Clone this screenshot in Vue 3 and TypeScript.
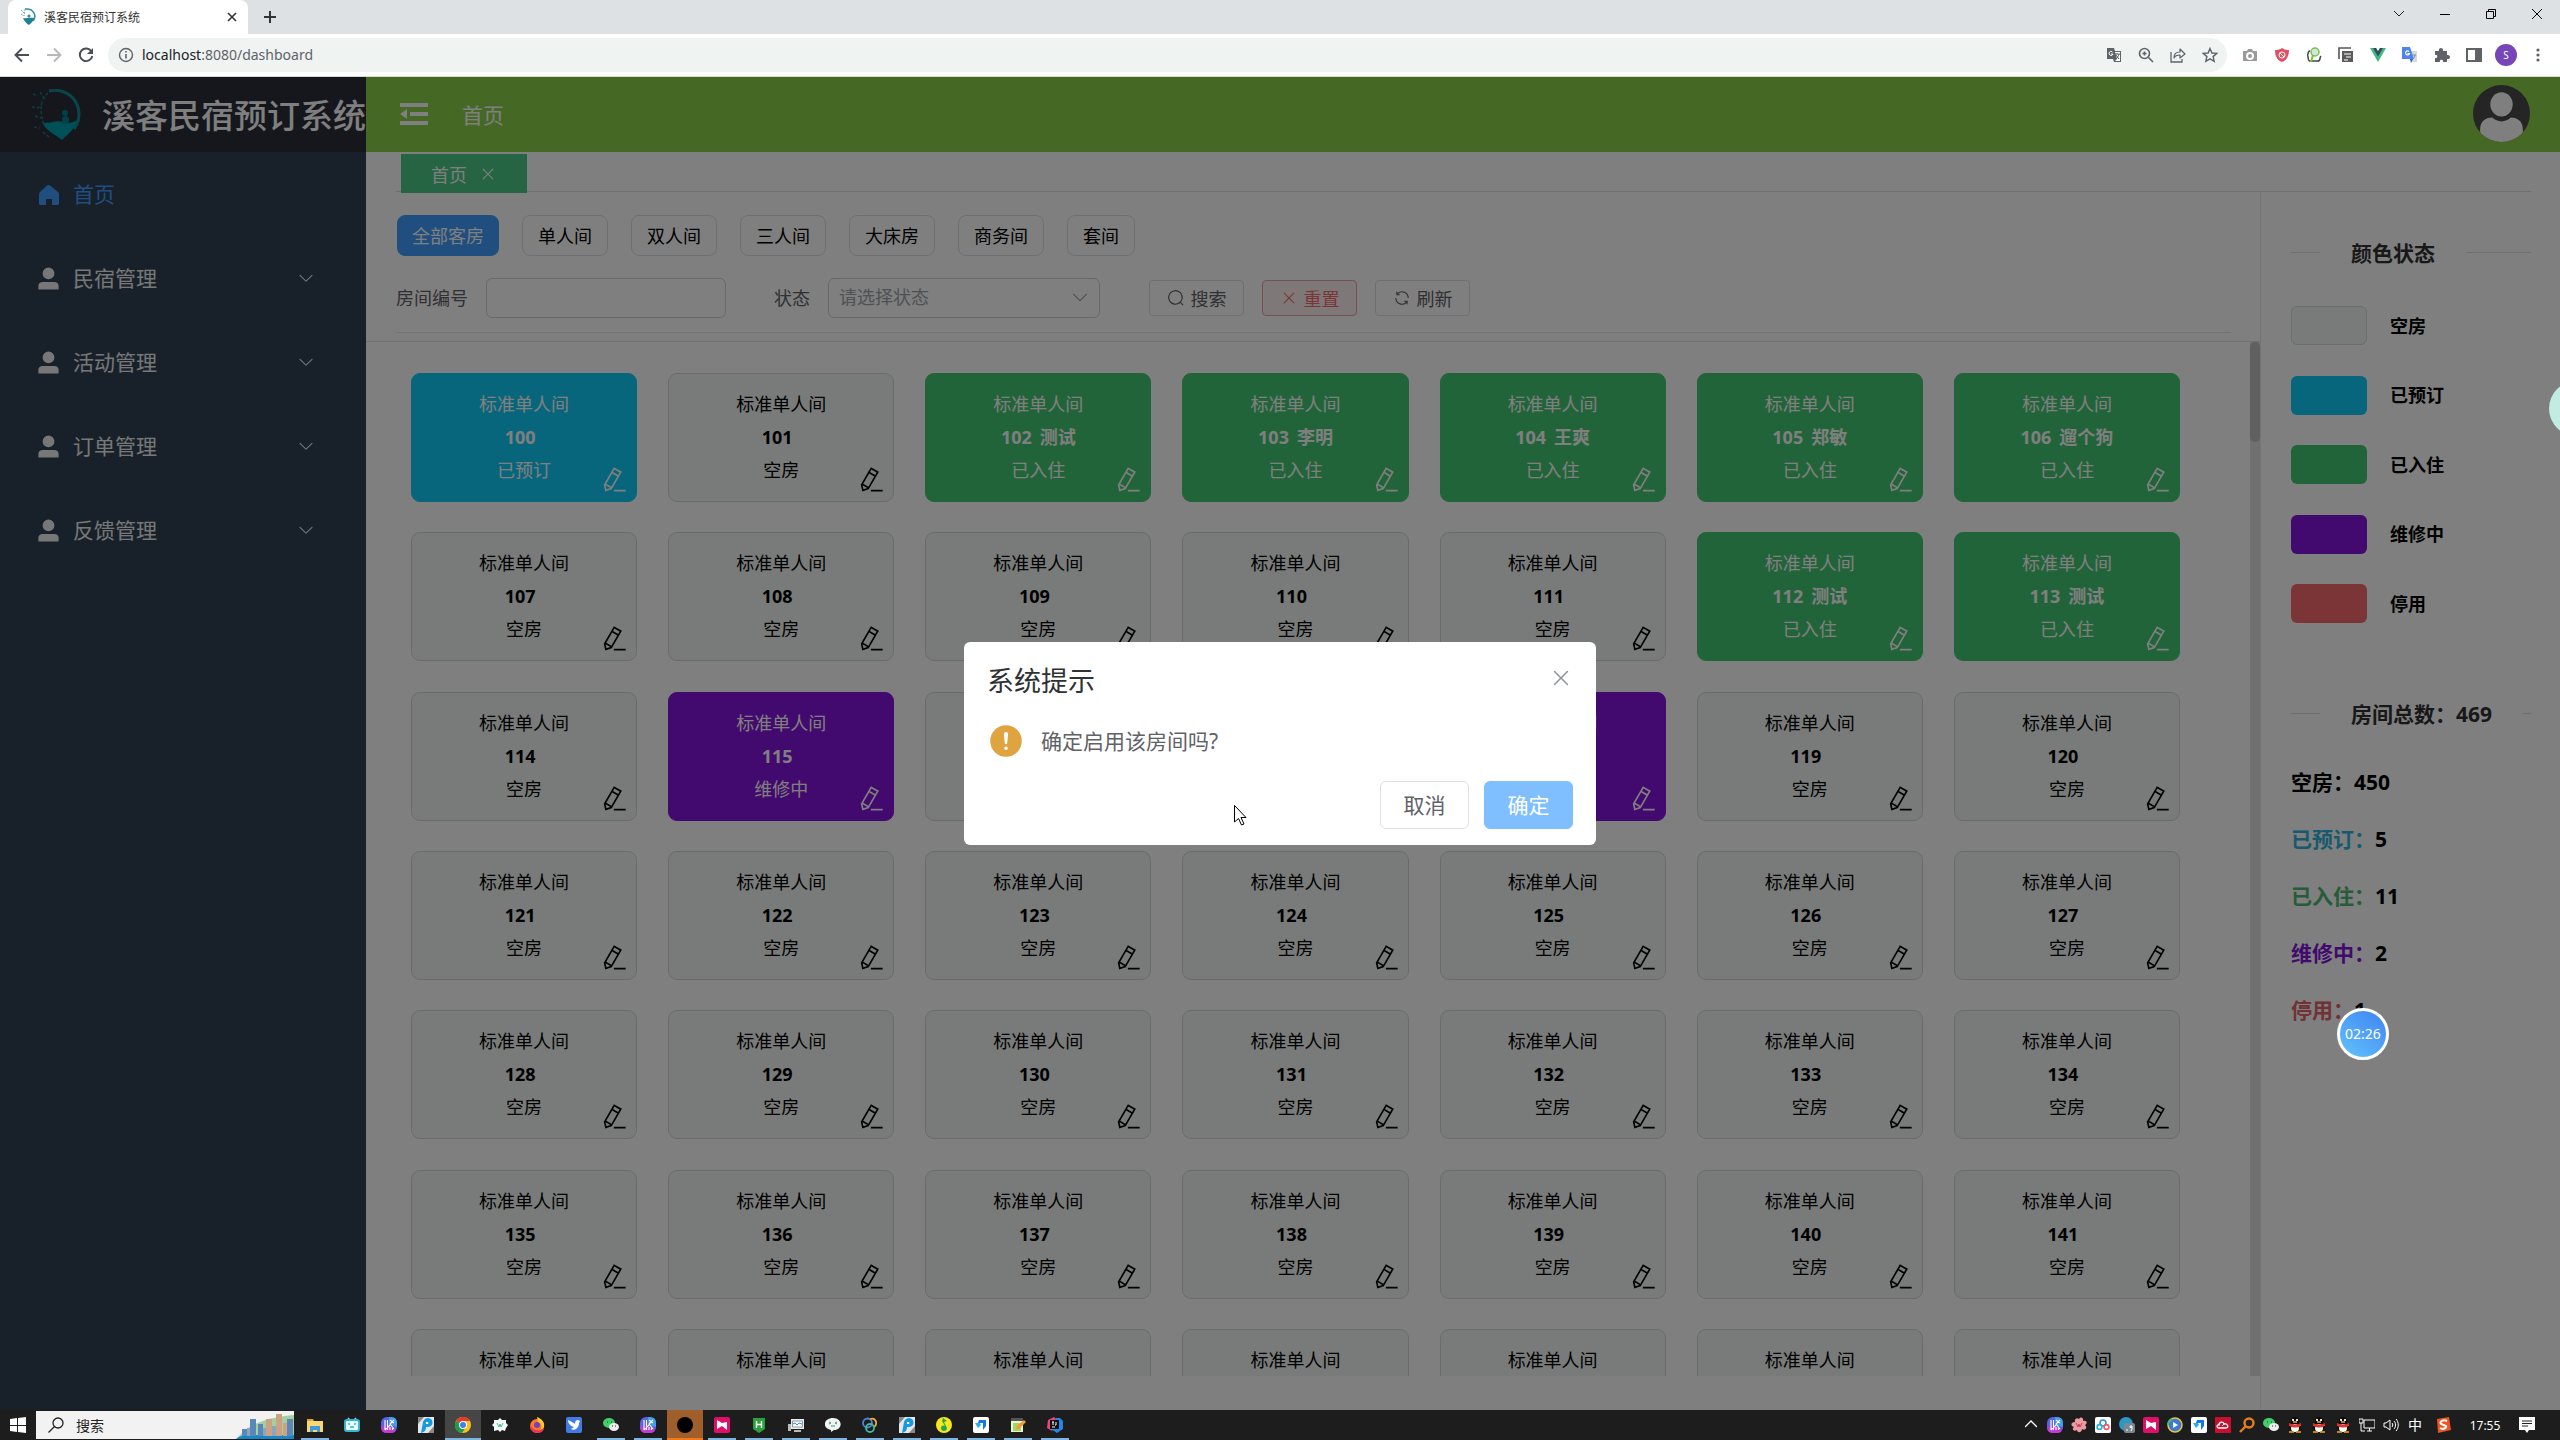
<script setup lang="ts">
import { ref } from 'vue'

type Status = 'empty' | 'booked' | 'occupied' | 'repair' | 'disabled'

interface Room {
  no: number
  guest: string
  status: Status
}

const statusText: Record<Status, string> = {
  empty: '空房',
  booked: '已预订',
  occupied: '已入住',
  repair: '维修中',
  disabled: '停用',
}
const statuses = Object.keys(statusText) as Status[]
const counts: Record<Status, number> = { empty: 450, booked: 5, occupied: 11, repair: 2, disabled: 1 }

const special: Record<number, [Status, string]> = {
  100: ['booked', ''],
  102: ['occupied', '测试'],
  103: ['occupied', '李明'],
  104: ['occupied', '王爽'],
  105: ['occupied', '郑敏'],
  106: ['occupied', '遛个狗'],
  112: ['occupied', '测试'],
  113: ['occupied', '测试'],
  115: ['repair', ''],
  118: ['repair', ''],
}
const rooms: Room[] = Array.from({ length: 49 }, (_, i) => {
  const no = 100 + i
  const [status, guest] = special[no] ?? ['empty', '']
  return { no, guest, status }
})

const types = ['全部客房', '单人间', '双人间', '三人间', '大床房', '商务间', '套间']
const activeType = ref('全部客房')
const menus = ['民宿管理', '活动管理', '订单管理', '反馈管理']
const roomNo = ref('')
const roomStatus = ref('')

const ep = {
  user: 'M288 320a224 224 0 1 0 448 0 224 224 0 1 0-448 0m544 608H160a32 32 0 0 1-32-32v-96a160 160 0 0 1 160-160h448a160 160 0 0 1 160 160v96a32 32 0 0 1-32 32z',
  pen: 'm199.04 672.64 193.984 112 224-387.968-193.92-112-224 388.032zm-23.872 60.16 32.896 148.288 144.896-45.696zM455.04 229.248l193.92 112 56.704-98.112-193.984-112zM104.32 708.8l384-665.024 304.768 175.936L409.152 884.8h.064l-248.448 78.336zm384 254.272v-64h448v64z',
  down: 'M831.872 340.864 512 652.672 192.128 340.864a30.592 30.592 0 0 0-42.752 0 29.12 29.12 0 0 0 0 41.6L489.664 714.24a32 32 0 0 0 44.672 0l340.288-331.712a29.12 29.12 0 0 0 0-41.728 30.592 30.592 0 0 0-42.752 0z',
  close: 'M764.288 214.592 512 466.88 259.712 214.592a31.936 31.936 0 0 0-45.12 45.12L466.752 512 214.528 764.224a31.936 31.936 0 1 0 45.12 45.184L512 557.184l252.288 252.288a31.936 31.936 0 0 0 45.12-45.12L557.12 512.064l252.288-252.352a31.936 31.936 0 1 0-45.12-45.184z',
  search: 'm795.904 750.72 124.992 124.928a32 32 0 0 1-45.248 45.248L750.656 795.904a416 416 0 1 1 45.248-45.248zM480 832a352 352 0 1 0 0-704 352 352 0 0 0 0 704',
  refresh: 'M771.776 794.88A384 384 0 0 1 128 512h64a320 320 0 0 0 555.712 216.448H654.72a32 32 0 1 1 0-64h149.056a32 32 0 0 1 32 32v148.928a32 32 0 1 1-64 0v-50.56zM276.288 295.616h92.992a32 32 0 0 1 0 64H220.16a32 32 0 0 1-32-32V178.56a32 32 0 0 1 64 0v50.56A384 384 0 0 1 896.128 512h-64a320 320 0 0 0-555.776-216.384z',
  warning: 'M512 64a448 448 0 1 1 0 896 448 448 0 0 1 0-896m0 192a58.432 58.432 0 0 0-58.24 63.744l23.36 256.384a35.072 35.072 0 0 0 69.76 0l23.296-256.384A58.432 58.432 0 0 0 512 256m0 512a51.2 51.2 0 1 0 0-102.4 51.2 51.2 0 0 0 0 102.4',
}

/* 16 x 16 glyphs for the browser toolbar, task bar and tray */
const art: Record<string, string> = {
  translate: '<path d="M1 1h7l1 3h6v11H8l-1-3H1z" fill="#5f6368"/><path d="M9 5h5v9H9l2-2z" fill="#fff"/><path d="M9 7h5M11 6v1M13 7c-1 3-2 4-3 5M10 8l3 4" stroke="#5f6368" fill="none"/><path d="M6.500 5a2 2 0 1 0 .5 2H5" stroke="#fff" fill="none"/>',
  magnify: '<circle cx="6.500" cy="6.500" r="5" fill="none" stroke="#5f6368" stroke-width="1.600"/><path d="M10.500 10.500 15 15M4.500 6.500h4M6.500 4.500v4" stroke="#5f6368" stroke-width="1.600"/>',
  share: '<path d="M1 5v10h11v-3" fill="none" stroke="#5f6368" stroke-width="1.300"/><path d="M4 11c0-4 2-6 6-6V2l5 5-5 4V8c-3 0-5 1-6 3z" fill="none" stroke="#5f6368" stroke-width="1.200" stroke-linejoin="round"/>',
  star: '<path d="m8 1.500 1.900 4.500 4.900.4-3.700 3.200 1.100 4.800L8 11.900l-4.200 2.500 1.100-4.800L1.200 6.400 6.100 6z" fill="none" stroke="#5f6368" stroke-width="1.400"/>',
  camera: '<path d="M1 4h4l1-2h4l1 2h4v10H1z" fill="#9a9a9a"/><circle cx="8" cy="9" r="3" fill="none" stroke="#fff" stroke-width="2"/>',
  shield: '<path d="M8 1c2 1.500 4 2 7 2 0 6-2 10-7 12C3 13 1 9 1 3c3 0 5-.5 7-2z" fill="#df5266"/><circle cx="8" cy="8" r="3" fill="none" stroke="#fff"/><path d="m6 6 4 4" stroke="#fff"/>',
  leaf: '<path d="M4 4C1 4 3 8 1 8c2 0 0 6 3 6h8c3 0 1-3 3-5" fill="none" stroke="#444" stroke-width="1.500"/><circle cx="9" cy="5" r="4" fill="#cde8e4" stroke="#7bc143" stroke-width="1.500"/><path d="m7 8-2 7" stroke="#7bc143" stroke-width="2"/>',
  copy: '<path d="M1 12V1h12" fill="none" stroke="#555" stroke-width="1.600"/><path d="M4 4h11v11H4z" fill="#5a5a5a"/><path d="M6 7h7M8 10h5M6 13h4" stroke="#fff" stroke-width="1.200"/>',
  vue: '<path d="M0 1h6l2 3 2-3h6L8 15z" fill="#41b883"/><path d="M3 1h3l2 3.500L10 1h3L8 9.500z" fill="#35495e"/>',
  gtrans: '<path d="M7 4h8v11H9z" fill="#d5d8dc"/><path d="M0 0h8l4 12H0z" fill="#4d83ee"/><path d="M7 4.500a2 2 0 1 0 .5 2H5.500" stroke="#fff" stroke-width="1.200" fill="none"/><path d="M10 8h4M13 8c0 2-1 3-2 4" stroke="#78909c" fill="none"/><path d="m8 12 3 0-2 4z" fill="#2f5fc4"/>',
  puzzle: '<path d="M1 4h4c-1-4 5-4 4 0h4v4c4-1 4 5 0 4v3H9c1-3-4-3-3 0H1v-4c3 1 3-4 0-3z" fill="#5f6368"/>',
  panel: '<path d="M1 2h14v12H1z" fill="none" stroke="#5f6368" stroke-width="2"/><path d="M9 2h6v12H9z" fill="#5f6368"/>',
  dots: '<circle cx="8" cy="3" r="1.600" fill="#5f6368"/><circle cx="8" cy="8" r="1.600" fill="#5f6368"/><circle cx="8" cy="13" r="1.600" fill="#5f6368"/>',
  folder: '<path d="M0 2h6l1 2h9v4H0z" fill="#d9a62e"/><path d="M0 4h16v11H0z" fill="#f8d775"/><path d="M3 9h10v6h-3v-2H6v2H3z" fill="#3f9bd8"/>',
  tv: '<path d="m4 1 2 2M12 1l-2 2" stroke="#8fdcf0" stroke-width="1.500"/><rect x="1" y="3" width="14" height="11" rx="2" fill="#e8fbff" stroke="#35b5d6" stroke-width="2"/><path d="M4 7h2M10 7h2M6 10h4" stroke="#35b5d6" stroke-width="1.500"/>',
  maze: '<rect width="16" height="16" rx="6" fill="#5b62e0"/><path d="M8 0h2q6 0 6 6v4L8 8z" fill="#43a0e8"/><path d="M0 10q0 6 6 6h4q4 0 5-3L8 9z" fill="#c53ad0"/><path d="M4 3v10M6.500 3v10M9 3l4 3M9 7l4 5M13 3 9 7M4 13l5-5M9 10v3M11.500 11v2" stroke="#fff" stroke-width="1.100"/>',
  pix: '<path d="M0 0h16v16H0z" fill="#e4e8ea"/><path d="M0 0h6L0 7zM10 16h6V9z" fill="#888"/><path d="M3 16 5 5c1-3 3-4 5-4 6 0 6 9 0 9H8c0 3-1 5-5 6z" fill="#159ae0"/><path d="M8 7V5h2q1 1 0 2z" fill="#fff"/>',
  chrome: '<circle cx="8" cy="8" r="8" fill="#fbc116"/><path d="M8 8 1 4a8 8 0 0 1 14 0H8z" fill="#e33b2e"/><path d="M8 8 1 4a8 8 0 0 0 6 12l4-6z" fill="#1e9b4b"/><circle cx="8" cy="8" r="4" fill="#fff"/><circle cx="8" cy="8" r="3" fill="#3f7fe8"/>',
  flower: '<path d="M8 1l2 2 4 0 0 3 2 2-2 3-1 3-3-1-2 2-2-2-4 1 0-4-2-2 2-2V3l4 0z" fill="#f3fbf9"/><path d="m5 6 2 4 1-3 1 3 2-4" stroke="#5bb39b" fill="none"/>',
  fox: '<circle cx="8" cy="9" r="7" fill="#ff7a1f"/><path d="M8 0c5 2 8 5 7 10-1 2-2 3-4 3 3-4 1-7-2-8z" fill="#ffc832"/><circle cx="8" cy="8" r="3" fill="#7540c8"/><path d="M1 8c0 5 4 8 8 8s6-3 6-5c-5 4-11 3-14-3z" fill="#ee2f60"/>',
  bird: '<rect width="16" height="16" rx="2" fill="#3f7ce6"/><path d="M2 3c4 2 6 3 7 4 0-3 1-4 3-4l2 1-1 2c0 5-4 8-8 6l3-2C4 9 2 6 2 3z" fill="#fff"/>',
  wechat: '<ellipse cx="6" cy="6" rx="6" ry="5" fill="#3fd06b"/><ellipse cx="11" cy="10" rx="5" ry="4" fill="#eee"/><path d="M4 5h1M8 5h1M9 9h1M12 9h1" stroke="#333"/>',
  ribbon: '<rect width="16" height="16" rx="2" fill="#e0106a"/><path d="m3 3 5 3 5-1v8L8 9l-5 3z" fill="#fff"/>',
  hb: '<path d="M2 1h12v11l-6 4-6-4z" fill="#2da23a"/><path d="M5.500 4v7M10.500 4v7M5.500 7.500h5" stroke="#fff" stroke-width="1.400"/>',
  monitor: '<path d="M3 2h13v10H3z" fill="#ececec"/><path d="M4.500 4h10v6h-10z" fill="#fff" stroke="#8a9aa3"/><path d="m5 7 2-1 2 2 2-2 3 1" stroke="#2c92c8" fill="none"/><path d="M0 7h3v7H0zM6 13h7v2H6z" fill="#b8bcb8"/>',
  face: '<path d="M8 1c10 0 10 12 1 12l-3 2 0-2C-3 12-2 1 8 1z" fill="#f0f3f2"/><path d="m4 5 2 1-2 1M12 5l-2 1 2 1M6 9h4" stroke="#3a9a80" fill="none"/>',
  rings: '<circle cx="5.500" cy="6" r="4.500" fill="none" stroke="#4d83d8" stroke-width="1.800"/><path d="M8 2c6-2 8 5 4 8" fill="none" stroke="#f3a735" stroke-width="1.800"/><circle cx="8" cy="11" r="4" fill="none" stroke="#43b8a0" stroke-width="1.800"/>',
  music: '<circle cx="8" cy="8" r="8" fill="#fbe61b"/><path d="m7 1 4 3-3 1 3 6c0 4-6 4-6 0 0-2 2-3 4-2L6 4z" fill="#1fa65a"/>',
  todesk: '<rect width="16" height="16" rx="2" fill="#fff"/><path d="M6 3h7v6l-3 4V6H5z" fill="#1677e8"/><path d="M2 6h5l1 2-3 3z" fill="#27b0ee"/>',
  note: '<path d="M1 2h12v13H1z" fill="#e9f6d6"/><path d="M1 1h12v3H1z" fill="#555"/><path d="M3 6h8v8H3z" fill="#a4d65e"/><path d="m6 12 1-3 7-6 2 2-7 7z" fill="#f09a3c"/>',
  idea: '<path d="m1 3 6-3 5 5-7 9-5-3z" fill="#e94680"/><path d="M9 1h4l3 3v8l-6 4-6-4z" fill="#2187e8"/><path d="M3 3h9v9H3z" fill="#111"/><path d="M5 5h2M6 5v3M9 5v3H8M5 10h3" stroke="#fff"/>',
  dot: '<circle cx="8" cy="8" r="8" fill="#000"/>',
  sakura: '<path d="M8 2c2-3 5-1 4 2 4-1 5 2 2 4 3 3 0 6-3 4 0 4-5 4-5 1-3 2-6-1-3-3-4-1-3-5 1-5-1-3 2-5 4-3z" fill="#ee9aa4"/><path d="m5 6 2 4 1-3 1 3 2-4" stroke="#b8455a" fill="none"/>',
  cloud3: '<rect width="16" height="16" rx="2" fill="#fff"/><circle cx="8" cy="6" r="3" fill="none" stroke="#2b8fe8" stroke-width="1.600"/><circle cx="4.500" cy="10" r="2.400" fill="none" stroke="#2bb0e8" stroke-width="1.600"/><circle cx="11.500" cy="10" r="2.400" fill="none" stroke="#ee5a6a" stroke-width="1.600"/>',
  globe9: '<circle cx="7" cy="7" r="7" fill="#2c98c4"/><rect x="5" y="6" width="11" height="10" rx="2" fill="#7b8890"/><path d="M13 12V9h-2v1.500h2M13 12l-1 2M7 13h2" stroke="#fff" fill="none"/>',
  play: '<circle cx="8" cy="8" r="7" fill="#3d78d8" stroke="#e8c63a" stroke-width="1.500"/><path d="M1 8a7 7 0 0 1 4-6" stroke="#48b872" stroke-width="2" fill="none"/><path d="m6 5 5 3-5 3z" fill="#fff"/>',
  redcloud: '<rect width="16" height="16" rx="1" fill="#c8102e"/><path d="M4 11c-3 0-2-4 0-3 0-3 4-4 5-1 4-1 5 4 2 4z" fill="none" stroke="#fff" stroke-width="1.300"/><path d="m7 9 3-3" stroke="#fff"/>',
  lens: '<circle cx="10" cy="6" r="4.500" fill="none" stroke="#e87d1c" stroke-width="2.400"/><path d="m7 9-6 6" stroke="#e87d1c" stroke-width="2.400"/>',
  penguin: '<ellipse cx="8" cy="5" rx="4.500" ry="5" fill="#0a0a0a"/><ellipse cx="8" cy="10.500" rx="6" ry="4.500" fill="#0a0a0a"/><ellipse cx="8" cy="11" rx="4" ry="4" fill="#fff"/><path d="M2 6c4 2 8 2 12 0v3c-4 2-8 2-12 0z" fill="#e03030"/><path d="M6 2v2M10 2v2" stroke="#fff" stroke-width="1.800"/><path d="M2 15h5M9 15h5M6 5h4" stroke="#f6a81c" stroke-width="1.500"/>',
  net: '<path d="M5 3h11v8H5zM8 14h5M10.500 11v3" fill="none" stroke="#fff"/><path d="M0 2h4v4H0zM2 6v8h4" fill="none" stroke="#fff"/>',
  volume: '<path d="M1 6h2l4-3v10L3 10H1z" fill="none" stroke="#fff"/><path d="M9 6c1 1 1 3 0 4M11 4c2 2 2 6 0 8M13 2c3 3 3 9 0 12" fill="none" stroke="#fff"/>',
  sogou: '<path d="m2 2 12-2 2 13-13 3z" fill="#ee5423"/><path d="M12 4C8 2 4 5 6 7l5 2c1 2-3 4-6 2" fill="none" stroke="#fff" stroke-width="2"/>',
}

const toolbarLeft = ['translate', 'magnify', 'share', 'star']
const toolbarRight = ['camera', 'shield', 'leaf', 'copy', 'vue', 'gtrans', 'puzzle', 'panel']
const tasks: { icon: string; state?: string }[] = [
  { icon: 'folder', state: 'open' },
  { icon: 'tv' },
  { icon: 'maze' },
  { icon: 'pix' },
  { icon: 'chrome', state: 'active' },
  { icon: 'flower' },
  { icon: 'fox' },
  { icon: 'bird' },
  { icon: 'wechat', state: 'open' },
  { icon: 'maze', state: 'open' },
  { icon: 'dot', state: 'alert' },
  { icon: 'ribbon', state: 'open' },
  { icon: 'hb', state: 'open' },
  { icon: 'monitor', state: 'open' },
  { icon: 'face', state: 'open' },
  { icon: 'rings', state: 'open' },
  { icon: 'pix', state: 'open' },
  { icon: 'music', state: 'open' },
  { icon: 'todesk', state: 'open' },
  { icon: 'note', state: 'open' },
  { icon: 'idea', state: 'open' },
]
const tray = ['maze', 'sakura', 'cloud3', 'globe9', 'ribbon', 'play', 'todesk', 'redcloud', 'lens', 'wechat', 'penguin', 'penguin', 'penguin', 'net', 'volume']
</script>

<template>
  <div class="screen">
    <header class="chrome">
      <div class="tabstrip">
        <div class="tab">
          <svg class="favicon" viewBox="0 0 16 18">
            <path d="M5 1c9-1 12 7 8 12" fill="none" stroke="#2a8c9e" stroke-width="1.500" />
            <path d="M3 10c3 1 6-1 11 0-1 4-4 6-5 7-2-1-5-4-6-7z" fill="#1f7f95" />
            <path d="M1 2l3 3M1 6l3 2M5 1 4 8" stroke="#8aa" stroke-dasharray="2 1" />
            <circle cx="9" cy="8" r="1.500" fill="#2a8c9e" />
          </svg>
          <span class="tab-title">溪客民宿预订系统</span>
          <button class="plain" aria-label="关闭标签页">
            <svg width="10" height="10" viewBox="0 0 10 10"><path d="m1 1 8 8M9 1 1 9" stroke="#333" stroke-width="1.600" /></svg>
          </button>
        </div>
        <button class="plain newtab" aria-label="新标签页">
          <svg width="12" height="12" viewBox="0 0 12 12"><path d="M6 0v12M0 6h12" stroke="#333" stroke-width="2" /></svg>
        </button>
        <div class="winctl">
          <button class="plain" aria-label="搜索标签页"><svg width="10" height="10" viewBox="0 0 10 10"><path d="m0 2 5 5 5-5" fill="none" stroke="#222" /></svg></button>
          <button class="plain" aria-label="最小化"><svg width="10" height="10" viewBox="0 0 10 10"><path d="M0 5.500h10" stroke="#000" /></svg></button>
          <button class="plain" aria-label="还原"><svg width="10" height="10" viewBox="0 0 10 10"><path d="M.5 2.500h7v7h-7zM2.500 2.500v-2h7v7h-2" fill="none" stroke="#000" /></svg></button>
          <button class="plain" aria-label="关闭"><svg width="10" height="10" viewBox="0 0 10 10"><path d="m0 0 10 10M10 0 0 10" stroke="#000" /></svg></button>
        </div>
      </div>
      <div class="toolbar">
        <button class="plain nav-btn" aria-label="后退"><svg width="16" height="16" viewBox="0 0 16 16"><path d="M15 8H2M8 1.500 1.500 8 8 14.500" fill="none" stroke="#4a4d51" stroke-width="1.900" /></svg></button>
        <button class="plain nav-btn" aria-label="前进"><svg width="16" height="16" viewBox="0 0 16 16"><path d="M1 8h13M8 1.500 14.500 8 8 14.500" fill="none" stroke="#b6b8ba" stroke-width="1.900" /></svg></button>
        <button class="plain nav-btn" aria-label="重新加载"><svg width="16" height="16" viewBox="0 0 16 16"><path d="M13.500 4.500A6.300 6.300 0 1 0 14.300 9" fill="none" stroke="#4a4d51" stroke-width="1.900" /><path d="M15 1v6H9z" fill="#4a4d51" /></svg></button>
        <div class="omnibox">
          <svg width="16" height="16" viewBox="0 0 16 16"><circle cx="8" cy="8" r="6.500" fill="none" stroke="#5f6368" stroke-width="1.400" /><path d="M8 7v4.500M8 4v1.600" stroke="#5f6368" stroke-width="1.600" /></svg>
          <span class="url">localhost<i>:8080/dashboard</i></span>
          <div class="glyphs">
            <svg v-for="n in toolbarLeft" :key="n" width="16" height="16" viewBox="0 0 16 16" v-html="art[n]"></svg>
          </div>
        </div>
        <div class="glyphs ext">
          <svg v-for="n in toolbarRight" :key="n" width="16" height="16" viewBox="0 0 16 16" v-html="art[n]"></svg>
          <span class="profile">S</span>
          <svg width="16" height="16" viewBox="0 0 16 16" v-html="art.dots"></svg>
        </div>
      </div>
    </header>

    <div class="app">
      <aside class="sidebar">
        <div class="brand">
          <svg class="logo" viewBox="0 0 52 52">
            <path d="M18 2C42-3 56 22 43 40" fill="none" stroke="#0f8f99" stroke-width="3" />
            <path d="M11 33c8 3 14-3 20 0 5 2 8 1 15-1-3 9-10 14-15 19-6-5-16-9-20-18z" fill="#00a0b0" />
            <path d="M31 35v-6a4 4 0 0 1 7 0v6z" fill="#00808e" />
            <circle cx="34" cy="24" r="3" fill="#00808e" />
            <path d="M17 4C8 12 9 24 13 35M2 5l5 2M1 18l6 1 4-4M4 27l6 2M3 38l6 1M9 3l4 6M12 43l6 5" fill="none" stroke="#187a84" stroke-width="1.500" stroke-dasharray="3 2" />
          </svg>
          <h1>溪客民宿预订系统</h1>
        </div>
        <nav>
          <a class="item current" href="#">
            <svg class="mi" viewBox="0 0 27 27"><path d="M12 4.500q1.500-1.200 3 0l8 6.500q1 .8 1 2v9.500q0 1.500-1.500 1.500H17v-6h-6v6H5.500Q4 24 4 22.500V13q0-1.200 1-2z" fill="currentColor" /></svg>
            <span>首页</span>
          </a>
          <a v-for="m in menus" :key="m" class="item" href="#">
            <svg class="mi" viewBox="0 0 1024 1024"><path :d="ep.user" fill="currentColor" /></svg>
            <span>{{ m }}</span>
            <svg class="caret" viewBox="0 0 1024 1024"><path :d="ep.down" fill="currentColor" /></svg>
          </a>
        </nav>
      </aside>

      <main class="main">
        <div class="topbar">
          <button class="plain" aria-label="折叠菜单">
            <svg width="28" height="22" viewBox="0 0 28 22"><path d="M0 0h28v4H0zM10 9h18v4H10zM0 18h28v4H0zM0 11l7-5v10z" fill="#fff" /></svg>
          </button>
          <span class="crumb">首页</span>
          <svg class="avatar" viewBox="0 0 56 56">
            <defs><clipPath id="round"><circle cx="28" cy="28" r="28" /></clipPath></defs>
            <g clip-path="url(#round)">
              <path d="M0 0h56v56H0z" fill="#4a4a4a" />
              <ellipse cx="28" cy="19" rx="11" ry="12" fill="#fff" />
              <path d="M7 58V44c0-9 6-12 12-12 5 5 13 5 18 0 6 0 12 3 12 12v14z" fill="#fff" />
            </g>
          </svg>
        </div>
        <div class="tags">
          <div class="tag">
            <span>首页</span>
            <button class="plain" aria-label="关闭"><svg width="18" height="18" viewBox="0 0 1024 1024"><path :d="ep.close" fill="#fff" /></svg></button>
          </div>
        </div>
        <div class="body">
          <section class="rooms">
            <div class="filters">
              <div class="types">
                <button v-for="t in types" :key="t" :class="['type', { on: t === activeType }]" @click="activeType = t">{{ t }}</button>
              </div>
              <form class="query" @submit.prevent>
                <label for="room-no">房间编号</label>
                <input id="room-no" v-model="roomNo" type="text" />
                <label class="second" for="room-status">状态</label>
                <div class="select">
                  <select id="room-status" v-model="roomStatus">
                    <option value="">请选择状态</option>
                    <option v-for="s in statuses" :key="s" :value="s">{{ statusText[s] }}</option>
                  </select>
                  <svg viewBox="0 0 1024 1024"><path :d="ep.down" fill="currentColor" /></svg>
                </div>
                <div class="actions">
                  <button type="submit"><svg viewBox="0 0 1024 1024"><path :d="ep.search" fill="currentColor" /></svg>搜索</button>
                  <button type="reset" class="danger"><svg viewBox="0 0 1024 1024"><path :d="ep.close" fill="currentColor" /></svg>重置</button>
                  <button type="button"><svg viewBox="0 0 1024 1024"><path :d="ep.refresh" fill="currentColor" /></svg>刷新</button>
                </div>
              </form>
            </div>
            <div class="scroller">
              <div class="grid">
                <article v-for="r in rooms" :key="r.no" :class="['card', r.status]">
                  <p>标准单人间</p>
                  <p class="no"><span>{{ r.no }}</span><span>{{ r.guest }}</span></p>
                  <p>{{ statusText[r.status] }}</p>
                  <button class="plain edit" :aria-label="'编辑 ' + r.no"><svg viewBox="0 0 1024 1024"><path :d="ep.pen" fill="currentColor" /></svg></button>
                </article>
              </div>
              <div class="track"><div class="thumb"></div></div>
            </div>
          </section>

          <aside class="legend">
            <h2><span>颜色状态</span></h2>
            <ul class="swatches">
              <li v-for="s in statuses" :key="s"><i :class="s"></i><span>{{ statusText[s] }}</span></li>
            </ul>
            <h2><span>房间总数：469</span></h2>
            <ul class="stats">
              <li v-for="s in statuses" :key="s"><span :class="'c-' + s">{{ statusText[s] }}：</span>{{ counts[s] }}</li>
            </ul>
          </aside>
        </div>
      </main>

      <div class="mask">
        <div class="dialog" role="dialog" aria-labelledby="dlg-title">
          <div class="dlg-head">
            <h3 id="dlg-title">系统提示</h3>
            <button class="plain" aria-label="关闭"><svg width="24" height="24" viewBox="0 0 1024 1024"><path :d="ep.close" fill="#909399" /></svg></button>
          </div>
          <div class="dlg-msg">
            <svg width="36" height="36" viewBox="0 0 1024 1024"><path :d="ep.warning" fill="#dfa33f" /></svg>
            <p>确定启用该房间吗?</p>
          </div>
          <div class="dlg-foot">
            <button>取消</button>
            <button class="primary">确定</button>
          </div>
          <svg class="cursor" viewBox="0 0 13 21"><path d="M.5.5v16.500l4-3.500 3 6.500 2.500-1-3-6.500h5z" fill="#fff" stroke="#000" /></svg>
        </div>
      </div>
      <div class="blob"></div>
      <div class="timer">02:26</div>
    </div>

    <footer class="taskbar">
      <button class="plain start" aria-label="开始"><svg width="16" height="16" viewBox="0 0 16 16"><path d="m0 2 7-1v7H0zM8 1l8-1v8H8zM0 9h7v6l-7-1zM8 9h8v7l-8-1z" fill="#fff" /></svg></button>
      <label class="find">
        <svg width="16" height="16" viewBox="0 0 16 16"><circle cx="10" cy="6" r="5" fill="none" stroke="#222" stroke-width="1.300" /><path d="m6.500 9.500-6 6" stroke="#222" stroke-width="1.300" /></svg>
        <input type="text" placeholder="搜索" />
        <svg class="city" viewBox="0 0 58 28">
          <path d="M8 20c12-10 30-14 50-16v24H0z" fill="#a5cf9d" />
          <path d="M0 28c4-3 6-4 14-4h44v4z" fill="#1688c8" />
          <path d="M6 18h5v7H6zM14 8h6v17h-6zM22 13h5v12h-5zM51 8h6v17h-6z" fill="#5a88b8" />
          <path d="M30 8h6v17h-6zM40 3h6v22h-6zM47 12h4v13h-4z" fill="#cda184" />
          <path d="M27 17h3v8h-3zM36 15h4v10h-4zM11 17h3v8h-3z" fill="#8aa5c0" />
        </svg>
      </label>
      <div class="tasks">
        <button v-for="(t, i) in tasks" :key="i" :class="['plain', 'task', t.state]" :aria-label="t.icon">
          <svg width="16" height="16" viewBox="0 0 16 16" v-html="art[t.icon]"></svg>
        </button>
      </div>
      <div class="tray">
        <svg width="12" height="16" viewBox="0 0 12 16"><path d="m0 10 6-6 6 6" fill="none" stroke="#fff" stroke-width="1.300" /></svg>
        <svg v-for="(t, i) in tray" :key="i" width="16" height="16" viewBox="0 0 16 16" v-html="art[t]"></svg>
        <span class="ime">中</span>
      </div>
      <svg class="sogou" width="16" height="16" viewBox="0 0 16 16" v-html="art.sogou"></svg>
      <time>17:55</time>
      <svg class="notice" width="16" height="16" viewBox="0 0 16 16"><path d="M0 0h16v13h-6l-2 3-2-3H0z" fill="#fff" /><path d="M3 4h10M3 6.500h10M3 9h6" stroke="#222" /></svg>
    </footer>
  </div>
</template>

<style>
body {
  margin: 0;
}
</style>

<style scoped>
.screen {
  display: flex;
  flex-direction: column;
  height: 100vh;
  overflow: hidden;
  font-family: "Noto Sans", "Noto Sans CJK SC", sans-serif;
  font-size: 18px;
  color: #000;
}
.screen * {
  box-sizing: border-box;
}
button,
input,
select {
  font: inherit;
  color: inherit;
}
h1,
h2,
h3,
p,
ul {
  margin: 0;
  padding: 0;
  list-style: none;
}
a {
  text-decoration: none;
}
svg {
  display: block;
  flex: none;
}
.plain {
  display: flex;
  align-items: center;
  justify-content: center;
  padding: 0;
  border: 0;
  background: none;
}

/* browser */
.chrome {
  flex: none;
}
.tabstrip {
  display: flex;
  height: 34px;
  padding-left: 8px;
  background: #dee1e4;
}
.tab {
  display: flex;
  align-items: center;
  width: 240px;
  padding: 0 11px 0 12px;
  background: #fff;
  border-radius: 8px 8px 0 0;
}
.favicon {
  width: 16px;
  height: 18px;
}
.tab-title {
  flex: 1;
  margin-left: 8px;
  font-size: 12px;
  color: #333;
}
.newtab {
  width: 44px;
}
.winctl {
  display: flex;
  margin-left: auto;
  padding-bottom: 6px;
}
.winctl .plain {
  width: 46px;
}
.toolbar {
  display: flex;
  align-items: center;
  height: 43px;
  padding: 0 14px 1px 6px;
  background: #fff;
  border-bottom: 1px solid #d5dccf;
}
.nav-btn {
  width: 32px;
}
.omnibox {
  display: flex;
  flex: 1;
  align-items: center;
  height: 34px;
  margin-left: 6px;
  padding: 0 9px 0 10px;
  background: #eff3f2;
  border-radius: 17px;
}
.url {
  flex: 1;
  margin-left: 8px;
  font-size: 14px;
  color: #202124;
}
.url i {
  font-style: normal;
  color: #5f6368;
}
.glyphs {
  display: flex;
  align-items: center;
  gap: 16px;
}
.ext {
  margin-left: 15px;
}
.profile {
  width: 22px;
  height: 22px;
  margin: 0 -3px;
  border-radius: 50%;
  background: #7646b8;
  color: #fff;
  font-size: 10px;
  line-height: 22px;
  text-align: center;
}

/* application shell */
.app {
  position: relative;
  display: flex;
  flex: 1;
  min-height: 0;
  background: #fff;
}
.sidebar {
  flex: none;
  width: 366px;
  background: #304254;
}
.brand {
  display: flex;
  align-items: center;
  height: 75px;
  padding-left: 31px;
  background: #2b2f3a;
}
.logo {
  width: 52px;
  height: 52px;
}
.brand h1 {
  margin-left: 19px;
  padding-bottom: 2px;
  font-family: KaiTi, "Noto Sans CJK SC", sans-serif;
  font-size: 33px;
  font-weight: 500;
  line-height: 48px;
  white-space: nowrap;
  color: #fff;
}
.item {
  display: flex;
  align-items: center;
  height: 84px;
  padding: 0 51px 0 35px;
  font-size: 21px;
  color: #eee;
}
.item.current {
  color: #409eff;
}
.item span {
  flex: 1;
  margin-left: 11px;
  padding-bottom: 2px;
}
.mi {
  width: 27px;
  height: 27px;
}
.caret {
  width: 18px;
  height: 18px;
}
.main {
  display: flex;
  flex: 1;
  flex-direction: column;
  min-width: 0;
}
.topbar {
  display: flex;
  flex: none;
  align-items: center;
  height: 75px;
  padding: 0 30px 2px 34px;
  background: #8ad24a;
}
.crumb {
  flex: 1;
  margin-left: 34px;
  font-size: 21px;
  color: #fff;
}
.avatar {
  width: 57px;
  height: 57px;
}
.tags {
  display: flex;
  flex: none;
  margin: 0 29px 0 30px;
  padding: 2px 0 0 5px;
  border-bottom: 1px solid #e0e0e0;
}
.tag {
  display: flex;
  align-items: center;
  gap: 12px;
  height: 39px;
  margin-bottom: -2px;
  padding: 0 30px;
  background: #4acb86;
  color: #fff;
}
.body {
  display: flex;
  flex: 1;
  min-height: 0;
}
.rooms {
  display: flex;
  flex: 1;
  flex-direction: column;
  min-width: 0;
}
.filters {
  margin: 0 29px 8px 30px;
  padding: 23px 0 14px;
  border-bottom: 1px solid #e4e4e4;
}
.types {
  display: flex;
  gap: 23px;
  margin-left: 1px;
}
.type {
  height: 41px;
  padding: 0 15px 2px;
  border: 1px solid #dcdfe6;
  border-radius: 8px;
  background: none;
}
.type.on {
  padding: 0 14px 2px;
  border-color: #409eff;
  background: #409eff;
  color: #fff;
}
.query {
  display: flex;
  align-items: center;
  margin-top: 22px;
  color: #606266;
}
.query label {
  padding-bottom: 2px;
}
.query input {
  width: 240px;
  height: 40px;
  margin-left: 18px;
  padding: 0 16px;
  border: 1px solid #d0d2d6;
  border-radius: 6px;
  background: none;
}
.query .second {
  margin-left: 48px;
}
.select {
  position: relative;
  margin-left: 18px;
}
.select select {
  display: block;
  width: 272px;
  height: 40px;
  padding: 0 10px 2px;
  border: 1px solid #d0d2d6;
  border-radius: 6px;
  appearance: none;
  background: none;
  color: #a0a3aa;
}
.select svg {
  position: absolute;
  top: 9px;
  right: 10px;
  width: 20px;
  height: 20px;
  color: #a0a3aa;
}
.actions {
  display: flex;
  gap: 18px;
  margin-left: 49px;
}
.actions button {
  display: flex;
  align-items: center;
  justify-content: center;
  gap: 6px;
  width: 95px;
  height: 36px;
  padding: 0 0 1px;
  border: 1px solid #dcdfe6;
  border-radius: 4px;
  background: none;
}
.actions svg {
  width: 18px;
  height: 18px;
}
.actions .danger {
  border-color: #f0a0a8;
  background: #fef0f0;
  color: #f56c6c;
}
.scroller {
  display: flex;
  flex: 1;
  min-height: 0;
  margin-bottom: 34px;
  border-top: 1px solid #e0e0e0;
  overflow: hidden;
}
.grid {
  display: grid;
  flex: 1;
  grid-template-columns: repeat(7, 1fr);
  align-content: space-between;
  column-gap: 31px;
  height: 1116px;
  padding: 31px 70px 0 45px;
}
.card {
  position: relative;
  height: 129px;
  padding-top: 14px;
  border: 1px solid #d4d8d8;
  border-radius: 9px;
  text-align: center;
  line-height: 33px;
}
.no {
  font-weight: 700;
}
.no span:first-child {
  margin-right: 8px;
}
.edit {
  position: absolute;
  right: 8px;
  bottom: 8px;
  color: inherit;
}
.edit svg {
  width: 27px;
  height: 27px;
}
.empty {
  background: #f3f6f5;
}
.booked {
  border-color: #10cdf8;
  background: #10cdf8;
}
.occupied {
  border-color: #44c872;
  background: #44c872;
}
.repair {
  border-color: #8412dc;
  background: #8412dc;
}
.disabled {
  border-color: #f66a6e;
  background: #f66a6e;
}
.card.booked,
.card.occupied,
.card.repair {
  color: #fff;
}
.track {
  width: 10px;
  background: #e0e0e0;
}
.thumb {
  height: 100px;
  border-radius: 5px;
  background: #c0c0c0;
}
.legend {
  width: 300px;
  padding: 42px 29px 0 30px;
  border-left: 1px solid #e8e8e8;
  font-weight: 700;
}
.legend h2 {
  display: flex;
  align-items: center;
  gap: 31px;
  height: 36px;
  font-size: 21px;
  color: #303133;
  white-space: nowrap;
}
.legend h2::before,
.legend h2::after {
  content: "";
  flex: 0 0 29px;
  height: 1px;
  background: #dcdfe6;
}
.legend h2::after {
  flex: 1;
}
.swatches {
  display: flex;
  flex-direction: column;
  justify-content: space-between;
  height: 317px;
  margin: 36px 0 72px;
}
.swatches li {
  display: flex;
  align-items: center;
  gap: 23px;
}
.swatches span {
  padding-bottom: 2px;
}
.swatches i {
  width: 76px;
  height: 39px;
  border-radius: 6px;
}
.swatches .empty {
  border: 1px solid #d4dcda;
}
.stats {
  margin-top: 23px;
  font-size: 21px;
  line-height: 57px;
}
.c-booked {
  color: #2fb4da;
}
.c-occupied {
  color: #4fb873;
}
.c-repair {
  color: #8412dc;
}
.c-disabled {
  color: #e06468;
}

/* dialog */
.mask {
  position: absolute;
  inset: 0;
  display: flex;
  align-items: center;
  justify-content: center;
  background: rgba(0, 0, 0, 0.5);
}
.dialog {
  position: relative;
  width: 632px;
  padding: 21px 23px 16px;
  border-radius: 6px;
  background: #fff;
}
.dlg-head {
  display: flex;
  align-items: flex-start;
  justify-content: space-between;
  height: 36px;
}
.dlg-head .plain {
  height: 30px;
}
.dlg-head h3 {
  font-size: 27px;
  font-weight: 400;
  line-height: 36px;
  color: #303133;
}
.dlg-msg {
  display: flex;
  align-items: center;
  gap: 17px;
  height: 36px;
  margin: 24px 0 22px 1px;
  font-size: 21px;
  color: #606266;
}
.dlg-msg p {
  padding-bottom: 2px;
}
.dlg-foot {
  display: flex;
  justify-content: flex-end;
  gap: 15px;
}
.dlg-foot button {
  width: 89px;
  height: 48px;
  padding-bottom: 3px;
  border: 1px solid #dcdfe6;
  border-radius: 6px;
  background: #fff;
  font-size: 21px;
  color: #606266;
}
.dlg-foot .primary {
  border-color: #7fbfff;
  background: #7fbfff;
  color: #fff;
}
.cursor {
  position: absolute;
  top: 163px;
  left: 270px;
  width: 13px;
  height: 21px;
}
.blob {
  position: absolute;
  top: 304px;
  right: -44px;
  width: 55px;
  height: 55px;
  border-radius: 50%;
  background: #c2ece1;
  clip-path: inset(0 44px 0 0);
}
.timer {
  position: absolute;
  top: 931px;
  right: 171px;
  width: 52px;
  height: 52px;
  border: 3px solid #fff;
  border-radius: 50%;
  background: linear-gradient(35deg, #62c4fb, #3f82f4);
  color: #fff;
  font-size: 14px;
  line-height: 46px;
  text-align: center;
}

/* task bar */
.taskbar {
  display: flex;
  flex: none;
  align-items: center;
  height: 30px;
  padding-right: 25px;
  background: #1d1d1d;
  color: #fff;
}
.start {
  width: 36px;
}
.find {
  display: flex;
  align-items: center;
  width: 258px;
  height: 28px;
  padding-left: 12px;
  background: #f2f2f2;
}
.find input {
  flex: 1;
  min-width: 0;
  padding: 0 0 0 12px;
  border: 0;
  background: none;
  font-size: 14px;
}
.find input::placeholder {
  color: #222;
}
.city {
  width: 58px;
  height: 28px;
}
.tasks {
  display: flex;
  flex: 1;
  align-self: stretch;
  gap: 1px;
  padding-left: 3px;
}
.task {
  width: 36px;
}
.task.open {
  background: linear-gradient(#7db4e0, #7db4e0) bottom / 28px 2px no-repeat;
}
.task.active {
  background: linear-gradient(#7db4e0, #7db4e0) bottom / 36px 2px no-repeat #464646;
}
.task.alert {
  background: linear-gradient(#f07a1a, #f07a1a) bottom / 36px 2px no-repeat #a05f2a;
}
.tray {
  display: flex;
  align-items: center;
  gap: 8px;
}
.tray > :first-child {
  margin-right: 2px;
}
.ime {
  width: 16px;
  font-size: 14px;
  line-height: 20px;
  text-align: center;
}
.sogou {
  margin-left: 12px;
}
time {
  width: 46px;
  margin: 0 11px;
  font-size: 12px;
  text-align: center;
}
</style>
